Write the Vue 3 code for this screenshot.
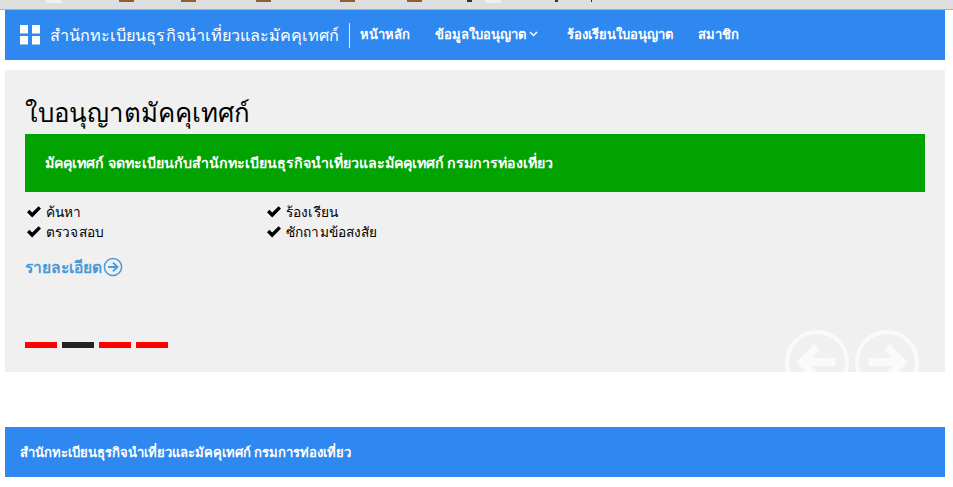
<script setup>
const topIcons = [
  { kind: 'doc', w: 16, gap: 57 },
  { kind: 'tab', w: 15, gap: 47 },
  { kind: 'tab', w: 15, gap: 60 },
  { kind: 'tab', w: 15, gap: 69 },
  { kind: 'tab', w: 15, gap: 52 },
  { kind: 'tab', w: 15, gap: 45 },
  { kind: 'mark', w: 5, gap: 13 },
  { kind: 'doc', w: 16, gap: 54 },
  { kind: 'mark', w: 3, gap: 33 },
  { kind: 'mark', w: 1, gap: 0 }
]
const checks = ['ค้นหา', 'ร้องเรียน', 'ตรวจสอบ', 'ซักถามข้อสงสัย']
const dots = ['red', 'dark', 'red', 'red']
</script>

<template>
  <div class="page">
    <div class="chrome">
      <span v-for="(t, i) in topIcons" :key="i" :class="t.kind" :style="{ width: t.w + 'px', marginRight: t.gap + 'px' }"></span>
    </div>
    <div class="content">
      <header class="nav">
        <svg class="logo" width="20" height="20" viewBox="0 0 20 20" fill="#fff">
          <rect x="0" y="0" width="8" height="8.5" />
          <rect x="12" y="0" width="8" height="8.5" />
          <rect x="0" y="11" width="8" height="8.5" />
          <rect x="12" y="11" width="8" height="8.5" />
        </svg>
        <span class="brand">สำนักทะเบียนธุรกิจนำเที่ยวและมัคคุเทศก์</span>
        <nav class="menu">
          <a>หน้าหลัก</a>
          <a class="drop">ข้อมูลใบอนุญาต
            <svg width="9" height="6" viewBox="0 0 9 6" fill="none" stroke="#fff" stroke-width="1.5"><path d="M1 1l3.5 3.5L8 1" /></svg>
          </a>
          <a>ร้องเรียนใบอนุญาต</a>
          <a>สมาชิก</a>
        </nav>
      </header>

      <section class="hero">
        <h1>ใบอนุญาตมัคคุเทศก์</h1>
        <div class="banner">มัคคุเทศก์ จดทะเบียนกับสำนักทะเบียนธุรกิจนำเที่ยวและมัคคุเทศก์ กรมการท่องเที่ยว</div>
        <ul class="checks">
          <li v-for="c in checks" :key="c">
            <svg width="14" height="12" viewBox="0 0 14 12" fill="#000"><path d="M0 6.2L2.4 3.8L5.2 6.6L11.6 0.2L14 2.6L5.2 11.4Z" /></svg>
            <span>{{ c }}</span>
          </li>
        </ul>
        <a class="more">รายละเอียด
          <svg width="20" height="20" viewBox="0 0 20 20" fill="none" stroke="#4b9ad8" stroke-width="2"><circle cx="10" cy="10" r="8.6" stroke-width="1.5" /><path d="M5 10h9M10 5.6L14.4 10L10 14.4" /></svg>
        </a>
        <div class="dots">
          <span v-for="(d, i) in dots" :key="i" :class="d"></span>
        </div>
        <div class="arrows">
          <svg width="64" height="64" viewBox="0 0 64 64" fill="none" stroke="#fafafa" stroke-width="4"><circle cx="32" cy="32" r="30" /><path d="M50 32H18M32 17L17 32L32 47" stroke-width="8" /></svg>
          <svg width="64" height="64" viewBox="0 0 64 64" fill="none" stroke="#fafafa" stroke-width="4"><circle cx="32" cy="32" r="30" /><path d="M14 32H46M32 17L47 32L32 47" stroke-width="8" /></svg>
        </div>
      </section>

      <footer class="foot">สำนักทะเบียนธุรกิจนำเที่ยวและมัคคุเทศก์ กรมการท่องเที่ยว</footer>
    </div>
  </div>
</template>

<style>
html, body { margin: 0; background: #fff; }
</style>

<style scoped>
.page { width: 953px; height: 487px; overflow: hidden; font-family: Tahoma, "Noto Sans", "DejaVu Sans", sans-serif; background: #fff; }
.chrome { height: 9px; background: #dedede; border-bottom: 1px solid #b0b0b0; display: flex; align-items: flex-start; padding-left: 46px; }
.doc { height: 3px; background: #f0f0f0; flex: none; }
.tab { height: 1.5px; background: #8a6039; flex: none; }
.mark { height: 2px; background: #333; flex: none; }
.content { padding: 0 8px 0 5px; }
.nav { height: 50px; background: #2e88f0; display: flex; align-items: center; padding-left: 15px; color: #fff; }
.logo { flex: none; }
.brand { margin-left: 10px; font-size: 16.2px; letter-spacing: .05px; font-weight: 500; white-space: nowrap; padding-right: 10px; border-right: 1px solid #d9e9fb; line-height: 25px; }
.menu { display: flex; gap: 25px; margin-left: 10px; font-size: 13px; font-weight: 700; white-space: nowrap; margin-top: -2px; }
.drop { display: flex; align-items: center; gap: 3px; margin-right: 4px; }
.hero { position: relative; margin-top: 10px; height: 302px; overflow: hidden; background: #f0f0f0; padding: 0 20px; box-sizing: border-box; }
h1 { margin: 0; padding-top: 21px; font-size: 25.8px; letter-spacing: .1px; font-weight: 400; line-height: 43px; color: #000; }
.banner { height: 58px; line-height: 58px; background: #00a300; color: #fff; padding-left: 20px; font-size: 14.2px; font-weight: 700; }
.checks { list-style: none; margin: 10px 0 0; padding: 0 0 0 2px; display: grid; grid-template-columns: 240px 240px; font-size: 13.7px; letter-spacing: .15px; line-height: 20px; }
.checks li { display: flex; align-items: center; gap: 5px; color: #000; }
.more { display: flex; align-items: center; gap: 1px; margin-top: 14px; color: #4b9ad8; font-size: 15.6px; font-weight: 700; height: 22px; }
.dots { display: flex; gap: 5px; margin-top: 64px; }
.dots span { width: 32px; height: 6px; }
.dots .red { background: #f00; }
.dots .dark { background: #222; }
.arrows { position: absolute; left: 780px; top: 260px; display: flex; gap: 6px; }
.foot { margin-top: 55px; height: 50px; line-height: 50px; background: #2e88f0; color: #fff; padding-left: 15px; font-size: 13.05px; font-weight: 700; }
</style>
